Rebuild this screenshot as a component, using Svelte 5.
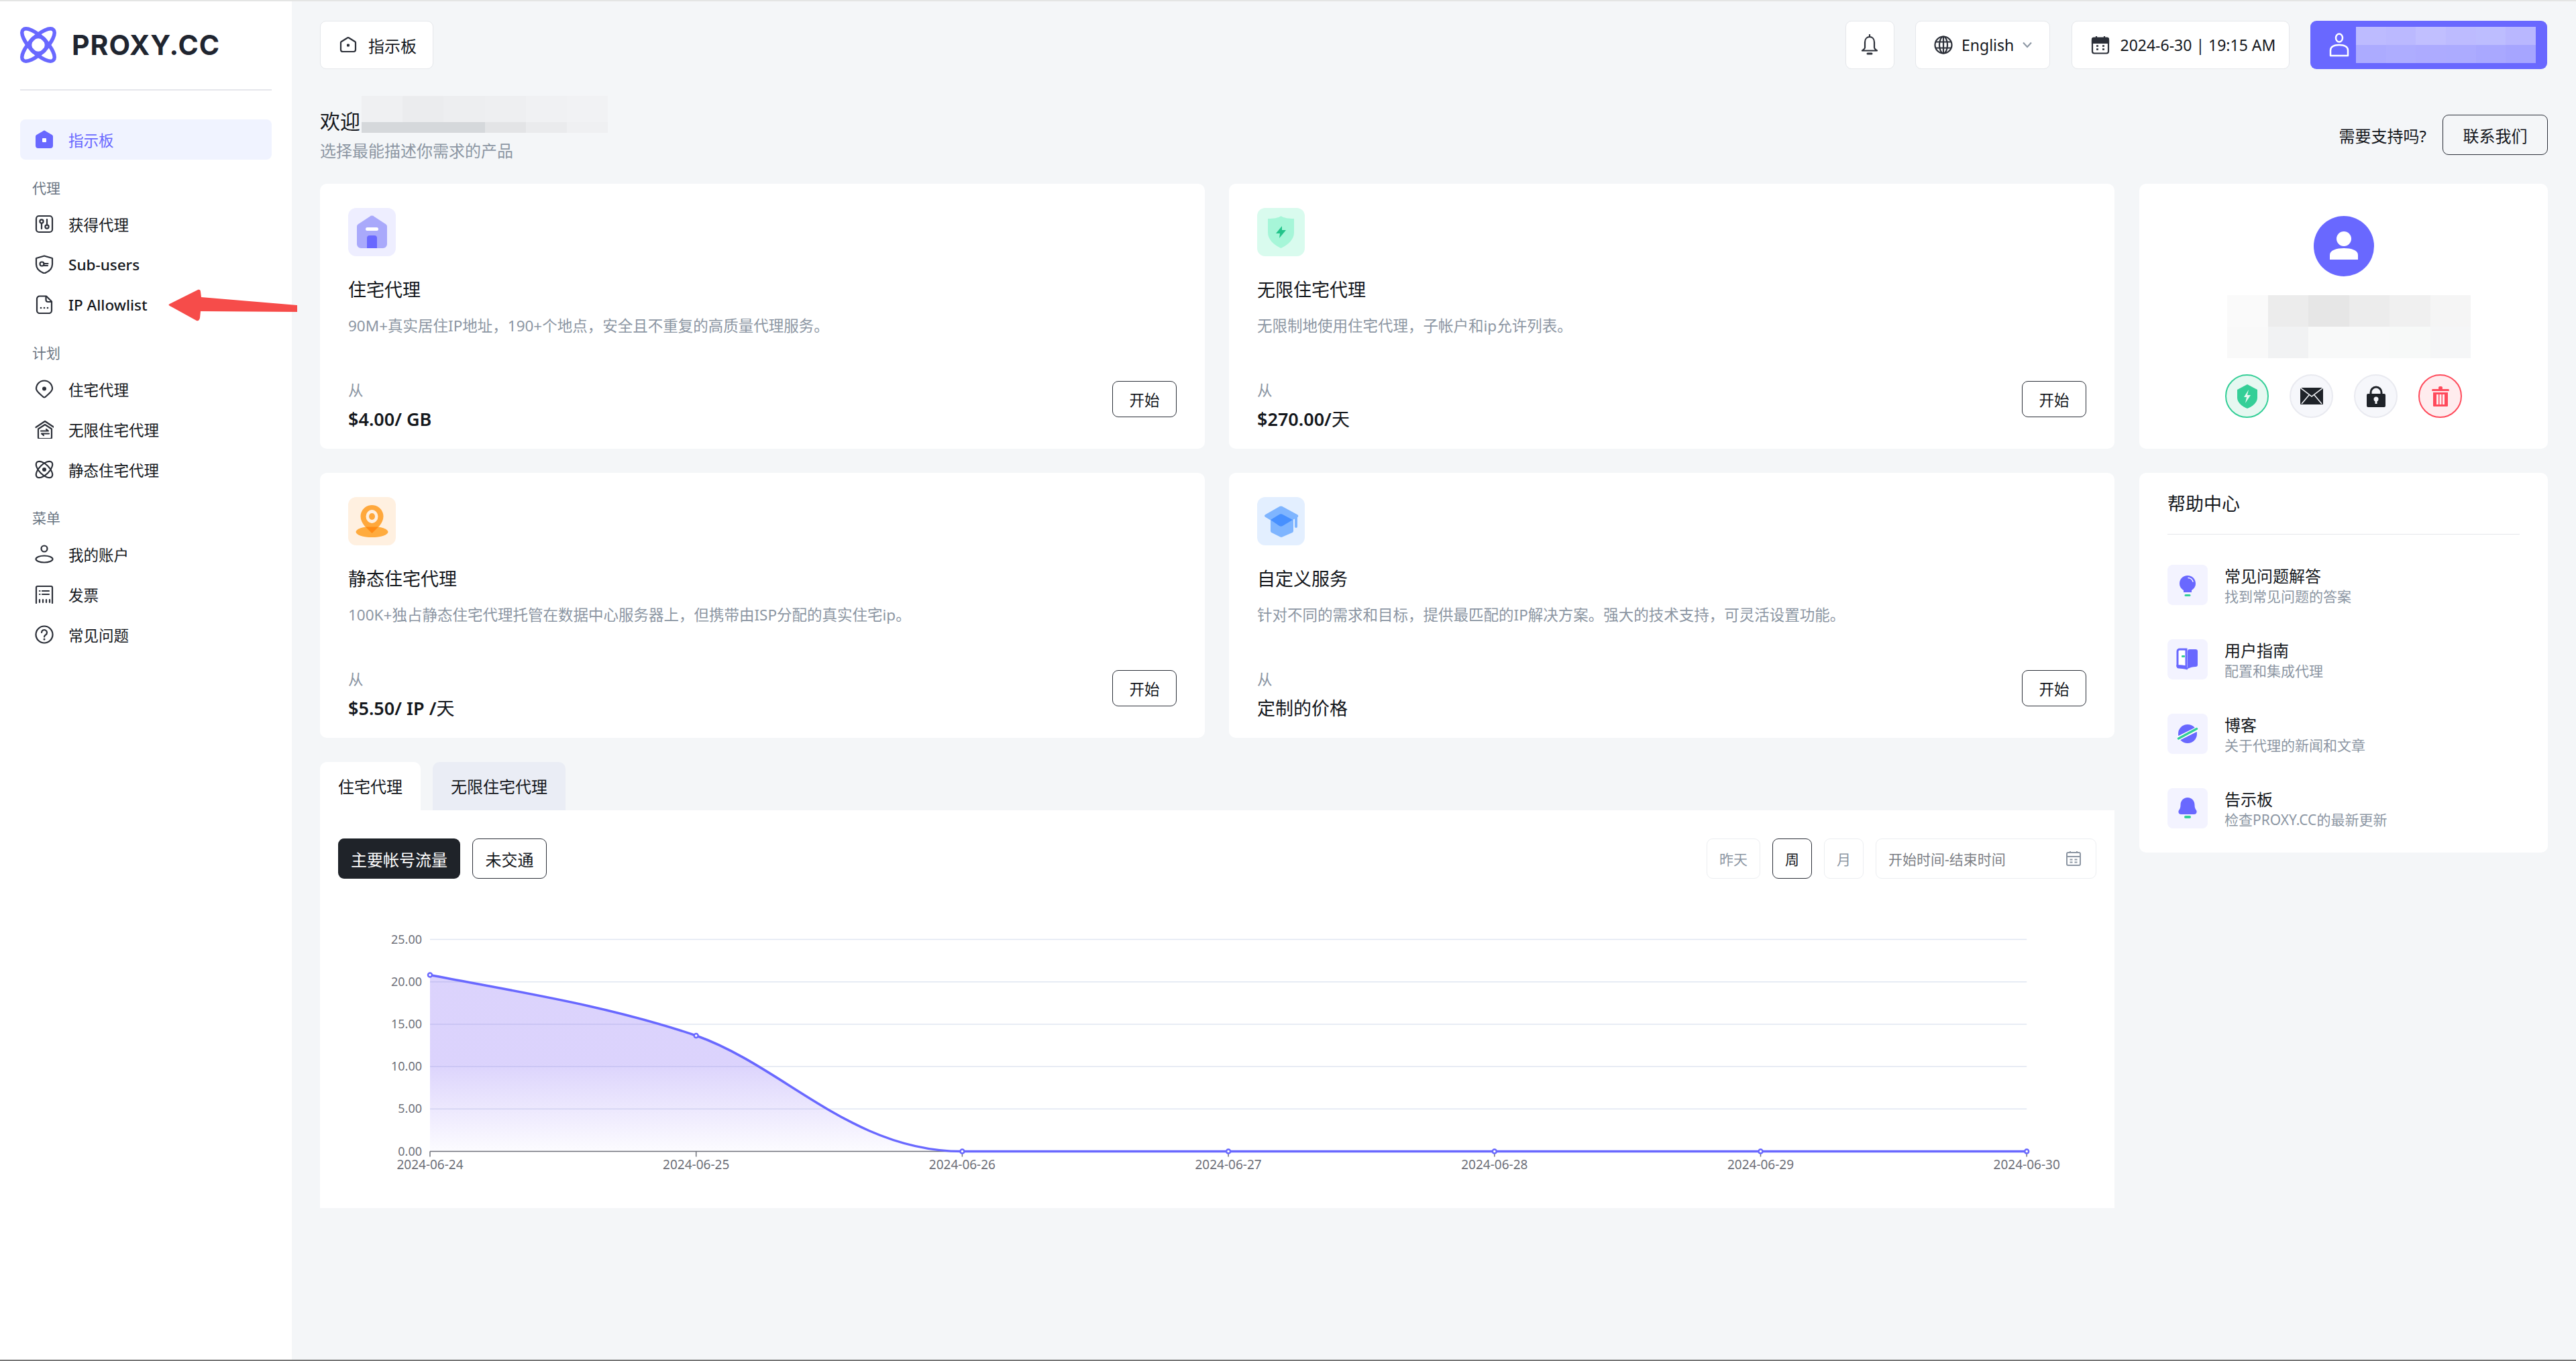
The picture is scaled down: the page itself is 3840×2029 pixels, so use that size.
<script>
    const ink = 'fill="none" stroke="#2b2f38" stroke-width="2.2" stroke-linecap="round" stroke-linejoin="round"';

    const icons = {
        sliders: `<g ${ink}><rect x="2" y="2" width="24" height="24" rx="4"/><circle cx="10" cy="10" r="2.6"/><path d="M10 13v8M18 7v7"/><circle cx="18" cy="18" r="2.6"/></g>`,
        shield: `<g ${ink}><path d="M14 1.5l12 3.5v9c0 7-5 11-12 13.5C7 25 2 21 2 14V5z"/><circle cx="10.5" cy="13.5" r="3"/><path d="M13.5 13h6M14 16h5"/></g>`,
        file: `<g ${ink}><path d="M7 1.5h10l8 8V23a4 4 0 0 1-4 4H7a4 4 0 0 1-4-4V5.500a4 4 0 0 1 4-4z"/><path d="M16.500 2v5a3 3 0 0 0 3 3H25"/></g><g fill="#2b2f38"><circle cx="9" cy="19" r="1.300"/><circle cx="14" cy="19" r="1.300"/><circle cx="19" cy="19" r="1.300"/></g>`,
        pin: `<g ${ink}><path d="M14 26.500c-1 0-2-1-3-2C6 20 2 17 2 13.500a12 12 0 0 1 24 0c0 3.500-4 6.500-9 11-1 1-2 2-3 2z"/></g><circle cx="14" cy="13.500" r="3" fill="#2b2f38"/>`,
        house: `<g ${ink}><path d="M1.500 11L15 2l13.500 9"/><path d="M5 13.500L15 7l10 6.500V26a2 2 0 0 1-2 2H7a2 2 0 0 1-2-2z"/><path d="M9 16.500h11l-3-2.500M21 20.500H10l3 2.500"/></g>`,
        atom: `<g ${ink}><ellipse cx="14" cy="14" rx="15.500" ry="7.500" transform="rotate(45 14 14)"/><ellipse cx="14" cy="14" rx="15.500" ry="7.500" transform="rotate(-45 14 14)"/></g><circle cx="14" cy="14" r="3" fill="#2b2f38"/>`,
        person: `<g ${ink}><circle cx="14" cy="6" r="4.500"/><ellipse cx="14" cy="21.500" rx="12.500" ry="5"/></g>`,
        receipt: `<g ${ink}><path d="M2 27V4a2 2 0 0 1 2-2h20a2 2 0 0 1 2 2v23"/><path d="M11 9h10M11 14h10M7 9h.5M7 14h.5M7 22v4M12 22v4M17 22v4M22 22v4"/></g>`,
        question: `<g ${ink}><circle cx="14" cy="14" r="12.500"/><path d="M10 11a4 4 0 1 1 6 3.500c-1.500.8-2 1.500-2 3"/></g><circle cx="14" cy="21" r="1.500" fill="#2b2f38"/>`
    };

    const sections = [
        { label: '代理', items: [
            { text: '获得代理', icon: 'sliders' },
            { text: 'Sub-users', icon: 'shield', latin: true },
            { text: 'IP Allowlist', icon: 'file', latin: true }
        ] },
        { label: '计划', items: [
            { text: '住宅代理', icon: 'pin' },
            { text: '无限住宅代理', icon: 'house' },
            { text: '静态住宅代理', icon: 'atom' }
        ] },
        { label: '菜单', items: [
            { text: '我的账户', icon: 'person' },
            { text: '发票', icon: 'receipt' },
            { text: '常见问题', icon: 'question' }
        ] }
    ];

    const cards = [
        {
            title: '住宅代理', tone: 'violet', price: '$4.00/ GB',
            desc: '90M+真实居住IP地址，190+个地点，安全且不重复的高质量代理服务。',
            art: `<path d="M13 28c0-1.500.5-2.500 1.500-3.500L32 13a5 5 0 0 1 7 0l17.500 11.500c1 1 1.500 2 1.500 3.500v26a6 6 0 0 1-6 6H19a6 6 0 0 1-6-6z" fill="#a9a9fb"/><rect x="26" y="29" width="19" height="5" rx="2.500" fill="#fff"/><path d="M28 45a4 4 0 0 1 4-4h7a4 4 0 0 1 4 4v15H28z" fill="#6968ff"/>`
        },
        {
            title: '无限住宅代理', tone: 'green', price: '$270.00/', unit: '天',
            desc: '无限制地使用住宅代理，子帐户和ip允许列表。',
            art: `<path d="M35.500 12c4 3 12 4 19.500 4v21c0 10-9 18-19.500 23C25 55 16 47 16 37V16c8 0 15.500-1 19.500-4z" fill="#a6f6d8"/><path d="M37 27L28 38h6l-1 7 10-12h-6z" fill="#22c48a"/>`
        },
        {
            title: '静态住宅代理', tone: 'orange', price: '$5.50/ IP /', unit: '天',
            desc: '100K+独占静态住宅代理托管在数据中心服务器上，但携带由ISP分配的真实住宅ip。',
            art: `<ellipse cx="35.500" cy="52" rx="24" ry="8" fill="#ffab3e"/><path d="M35.500 12c9.500 0 17 7.500 17 17 0 10-10 19-17 25-7-6-17-15-17-25 0-9.500 7.500-17 17-17z" fill="#ffa83c"/><path d="M26 44.500h19l-9.500 9.500z" fill="#ff8a14"/><ellipse cx="35.500" cy="29" rx="9" ry="10" fill="#fff0e0"/><ellipse cx="35.500" cy="29" rx="4.500" ry="5" fill="#ffa83c"/>`
        },
        {
            title: '自定义服务', tone: 'blue', unit: '定制的价格',
            desc: '针对不同的需求和目标，提供最匹配的IP解决方案。强大的技术支持，可灵活设置功能。',
            art: `<path d="M20 30h34v20.500a3 3 0 0 1-1.500 2.500l-15 6.500a3 3 0 0 1-3 0l-13-6.500a3 3 0 0 1-1.500-2.500z" fill="#7fb5ff"/><path d="M33.500 14a4 4 0 0 1 4 0l23 12.500c1 1 1 2.500 0 3.500l-23 12.500a4 4 0 0 1-4 0l-21-12.500c-2-1-2-3 0-4z" fill="#7fb5ff"/><path d="M33 26a5 5 0 0 1 5 0l15 8-15 9a5 5 0 0 1-5 0l-13-9z" fill="#4790ff"/><rect x="56" y="28" width="4" height="18" rx="2" fill="#7fb5ff"/>`
        }
    ];

    const helps = [
        { title: '常见问题解答', sub: '找到常见问题的答案',
          art: `<path d="M30 16c7 0 12 5 12 12 0 5-3 8-6 10v3H24v-3c-3-2-6-5-6-10 0-7 5-12 12-12z" fill="#6968ff"/><path d="M31 19.500c3 0 6 2.500 7 5.500" fill="none" stroke="#fff" stroke-width="1.500" stroke-linecap="round"/><rect x="25.500" y="44" width="9" height="3" rx="1.500" fill="#34cf97"/>` },
        { title: '用户指南', sub: '配置和集成代理',
          art: `<path d="M15 18a3 3 0 0 1 3-3h10v26c-4-1-8-1.500-13-1.500z" fill="#fff" stroke="#6968ff" stroke-width="3"/><path d="M30 44V18a3 3 0 0 1 3-3h9a3 3 0 0 1 3 3v20a3 3 0 0 1-3 3c-4 0-8 1-12 3z" fill="#6968ff"/><path d="M15 38v2a2 2 0 0 0 2 2c5 0 9 1 13 2" fill="none" stroke="#6968ff" stroke-width="3"/><rect x="21" y="24" width="5" height="3" rx="1" fill="#34cf97"/>` },
        { title: '博客', sub: '关于代理的新闻和文章',
          art: `<ellipse cx="30" cy="30" rx="14" ry="14" fill="#6968ff"/><path d="M16 37l28-14" stroke="#fff" stroke-width="6.500"/><path d="M16.500 37l27-14.500" stroke="#34cf97" stroke-width="3.500" stroke-linecap="round"/>` },
        { title: '告示板', sub: '检查PROXY.CC的最新更新',
          art: `<path d="M30 14c6.500 0 10.500 5 10.500 11 0 4 1 6 2.500 8 1.500 2.500 0 6-3 6H20c-3 0-4.500-3.500-3-6 1.500-2 2.500-4 2.500-8 0-6 4-11 10.500-11z" fill="#6968ff"/><rect x="25" y="41" width="10" height="4" rx="2" fill="#34cf97"/>` }
    ];

    // pixelated blocks that hide the account name
    const welcomeBlur = [
        ['#eff0f2', '#ebecee', '#edeef0', '#eeeff1', '#f0f1f3', '#f1f2f4'],
        ['#d5d8db', '#d5d8db', '#d5d8db', '#e3e4e6', '#eaebed', '#eff0f2']
    ];
    const profileBlur = [
        ['#fafafa', '#ececec', '#e6e6e6', '#ececec', '#f0f0f0', '#f5f5f5'],
        ['#f9f9f9', '#f1f2f3', '#f8f9f9', '#f8f9f9', '#f7f9f8', '#f5f6f7']
    ];
    const userBlur = [
        ['#bdbbff', '#bbb9ff', '#c1bfff', '#bdbbff', '#bdbdff', '#b9b7ff'],
        ['#acabff', '#aeadff', '#adabff', '#acabff', '#a9a8ff', '#a6a5ff']
    ];

    // chart, in page pixels through the svg viewBox
    const left = 641;
    const step = 396.7;
    const base = 1715.5;
    const unit = 63.2;
    const ticks = [0, 1, 2, 3, 4, 5];
    const dates = ['2024-06-24', '2024-06-25', '2024-06-26', '2024-06-27', '2024-06-28', '2024-06-29', '2024-06-30'];
    const points = [1452.5, 1543, base, base, base, base, base];
    const right = left + step * 6;
    const falling = 'M641 1452.500C773 1478 905 1498 1038 1543C1170 1590 1270 1715.500 1434.400 1715.500';
    const curve = `${falling}H${right}`;
    const area = `${falling}H641Z`;
</script>

<div class="page">
    <aside class="side">
        <div class="brand">
            <svg width="54" height="54" viewBox="0 0 54 54" fill="none" stroke="#6968ff" stroke-width="5.500">
                <ellipse cx="27" cy="27" rx="32" ry="12" transform="rotate(45 27 27)" />
                <ellipse cx="27" cy="27" rx="32" ry="12" transform="rotate(-45 27 27)" />
                <circle cx="27" cy="27" r="12.500" />
            </svg>
            <span>PROXY.CC</span>
        </div>

        <a class="nav active">
            <svg width="28" height="28" viewBox="0 0 28 28">
                <path d="M12 1.500a3 3 0 0 1 4 0l9.500 5.500a3 3 0 0 1 1.500 2.500V23a4 4 0 0 1-4 4H5a4 4 0 0 1-4-4V9.500A3 3 0 0 1 2.500 7z" fill="#6968ff" />
                <rect x="11" y="12" width="6" height="6" rx="1" fill="#fff" />
            </svg>
            指示板
        </a>

        {#each sections as section}
            <div class="group-label">{section.label}</div>
            {#each section.items as item}
                <a class="nav" class:latin={item.latin}>
                    <svg width="28" height="28" viewBox="0 0 28 28">{@html icons[item.icon]}</svg>
                    {item.text}
                </a>
            {/each}
        {/each}
    </aside>

    <main class="main">
        <header class="top">
            <div class="chip crumb">
                <svg width="26" height="26" viewBox="0 0 26 26" fill="none" stroke="#2b2f38" stroke-width="2.200" stroke-linejoin="round">
                    <path d="M11 3a3 3 0 0 1 4 0l8 5a2 2 0 0 1 1 2v10a3 3 0 0 1-3 3H5a3 3 0 0 1-3-3V10a2 2 0 0 1 1-2z" />
                    <rect x="11.500" y="12" width="3" height="3" fill="#2b2f38" stroke-width="1" />
                </svg>
                指示板
            </div>
            <div class="top-right">
                <div class="chip bell">
                    <svg width="26" height="32" viewBox="0 0 26 32" fill="none" stroke="#2b2f38" stroke-width="2.200" stroke-linecap="round" stroke-linejoin="round">
                        <path d="M13 1v3M13 4c-4 0-7 3-7 8v8c0 2-2 3-4 4.500h22c-2-1.500-4-2.500-4-4.500v-8c0-5-3-8-7-8z" />
                        <path d="M10 29h6" stroke-width="3" />
                    </svg>
                </div>
                <div class="chip lang">
                    <svg width="28" height="28" viewBox="0 0 28 28" fill="none" stroke="#2b2f38" stroke-width="2.200">
                        <circle cx="14" cy="14" r="12.500" />
                        <ellipse cx="14" cy="14" rx="6" ry="12.500" />
                        <path d="M3 9.500h22M3 18.500h22M14 1.500v25" />
                    </svg>
                    English
                    <svg width="14" height="10" viewBox="0 0 14 10" fill="none" stroke="#8c96a3" stroke-width="2"><path d="M1 1.500l6 6.500 6-6.500" /></svg>
                </div>
                <div class="chip date">
                    <svg width="28" height="28" viewBox="0 0 28 28" fill="none" stroke="#2b2f38" stroke-width="2.200">
                        <rect x="2" y="4" width="24" height="22.500" rx="3" />
                        <path d="M2 5.500a2 2 0 0 1 2-2h20a2 2 0 0 1 2 2V11H2z" fill="#2b2f38" />
                        <path d="M8 1v4M20 1v4" />
                        <path d="M8 15.500h3M17 15.500h3M8 20.500h3M17 20.500h3" stroke-width="2.500" />
                    </svg>
                    2024-6-30 | 19:15 AM
                </div>
                <div class="user-btn">
                    <svg width="30" height="40" viewBox="0 0 30 40" fill="none" stroke="#fff" stroke-width="2.500" stroke-linejoin="round">
                        <ellipse cx="15" cy="9.500" rx="5" ry="6" />
                        <path d="M2 36V28c0-5 5-8 13-8s13 3 13 8v8z" />
                    </svg>
                    <div class="blur user-blur">
                        {#each userBlur as row}
                            <div class="blur-row">
                                {#each row as shade}<i style:background={shade}></i>{/each}
                            </div>
                        {/each}
                    </div>
                </div>
            </div>
        </header>

        <section class="hello">
            <div>
                <div class="hello-line">
                    <span>欢迎</span>
                    <div class="blur hello-blur">
                        {#each welcomeBlur as row}
                            <div class="blur-row">
                                {#each row as shade}<i style:background={shade}></i>{/each}
                            </div>
                        {/each}
                    </div>
                </div>
                <p>选择最能描述你需求的产品</p>
            </div>
            <div class="support">
                需要支持吗?
                <button class="outline contact">联系我们</button>
            </div>
        </section>

        <div class="layout">
            <div class="col-left">
                <div class="cards">
                    {#each cards as card}
                        <article class="card">
                            <div class="art {card.tone}">
                                <svg width="71" height="72" viewBox="0 0 71 72">{@html card.art}</svg>
                            </div>
                            <h3>{card.title}</h3>
                            <p class="desc">{card.desc}</p>
                            <div class="foot">
                                <div>
                                    <div class="from">从</div>
                                    <div class="price">{card.price ?? ''}{#if card.unit}<span>{card.unit}</span>{/if}</div>
                                </div>
                                <button class="outline start">开始</button>
                            </div>
                        </article>
                    {/each}
                </div>

                <div class="tabs">
                    <div class="tab on">住宅代理</div>
                    <div class="tab">无限住宅代理</div>
                </div>
                <div class="panel">
                    <div class="tools">
                        <button class="dark">主要帐号流量</button>
                        <button class="outline unpaid">未交通</button>
                        <div class="range">
                            <span class="seg w80">昨天</span>
                            <span class="seg w60 sel">周</span>
                            <span class="seg w60">月</span>
                            <div class="picker">
                                开始时间-结束时间
                                <svg width="24" height="24" viewBox="0 0 24 24" fill="none" stroke="#8c96a3" stroke-width="2">
                                    <rect x="2" y="3" width="20" height="19" rx="2" />
                                    <path d="M2 9h20M7 1v3M17 1v3M6.500 13.500h4M13.500 13.500h4M6.500 17.500h4M13.500 17.500h4" />
                                </svg>
                            </div>
                        </div>
                    </div>
                    <svg class="chart" width="2675" height="440" viewBox="477 1360 2675 440">
                        <defs>
                            <linearGradient id="fade" x1="0" y1="0" x2="0" y2="1">
                                <stop offset="0" stop-color="#7b5cf5" stop-opacity="0.27" />
                                <stop offset="0.5" stop-color="#7b5cf5" stop-opacity="0.27" />
                                <stop offset="1" stop-color="#7b5cf5" stop-opacity="0.02" />
                            </linearGradient>
                        </defs>
                        {#each ticks as t}
                            {#if t > 0}
                                <line x1={left} x2={right} y1={base - t * unit} y2={base - t * unit} stroke="#e0e6f1" stroke-width="1.500" />
                            {/if}
                            <text class="y-label" x="629" y={base - t * unit + 6}>{(t * 5).toFixed(2)}</text>
                        {/each}
                        <path d={area} fill="url(#fade)" />
                        <line x1={left} x2={right} y1={base} y2={base} stroke="#6e7079" stroke-width="1.500" />
                        {#each dates as d, i}
                            <line x1={left + i * step} x2={left + i * step} y1={base} y2={base + 8} stroke="#6e7079" stroke-width="1.500" />
                            <text class="x-label" x={left + i * step} y={base + 26}>{d}</text>
                        {/each}
                        <path d={curve} fill="none" stroke="#6968ff" stroke-width="3.500" />
                        {#each points as y, i}
                            <circle cx={left + i * step} cy={y} r="3" fill="#fff" stroke="#6968ff" stroke-width="2.500" />
                        {/each}
                    </svg>
                </div>
            </div>

            <div class="col-right">
                <article class="profile">
                    <div class="avatar">
                        <svg width="48" height="48" viewBox="0 0 48 48" fill="#fff">
                            <ellipse cx="24" cy="13" rx="11" ry="11" />
                            <path d="M3 44v-7c0-7 10-10 21-10s21 3 21 10v7z" />
                        </svg>
                    </div>
                    <div class="blur profile-blur">
                        {#each profileBlur as row}
                            <div class="blur-row">
                                {#each row as shade}<i style:background={shade}></i>{/each}
                            </div>
                        {/each}
                    </div>
                    <div class="badges">
                        <span class="badge ok">
                            <svg width="32" height="36" viewBox="0 0 32 36">
                                <path d="M16 0l15 8v12c0 7-7 13-15 16C8 33 1 27 1 20V8z" fill="#34cf97" />
                                <path d="M18 8l-7 11h4l-2 9 8-12h-5z" fill="#e6f8f1" />
                            </svg>
                        </span>
                        <span class="badge">
                            <svg width="34" height="26" viewBox="0 0 34 26">
                                <rect width="34" height="25" rx="1" fill="#1f2329" />
                                <path d="M0 0l17 13L34 0M2 24l11-13M32 24L21 11" fill="none" stroke="#f6f7fb" stroke-width="1.500" />
                            </svg>
                        </span>
                        <span class="badge">
                            <svg width="28" height="32" viewBox="0 0 28 32">
                                <path d="M6 14V10a8 8 0 0 1 16 0v4" fill="none" stroke="#1f2329" stroke-width="3" />
                                <rect y="12" width="28" height="20" rx="2" fill="#1f2329" />
                                <circle cx="14" cy="20" r="3.500" fill="#f6f7fb" />
                                <rect x="12.500" y="20" width="3" height="7" fill="#f6f7fb" />
                            </svg>
                        </span>
                        <span class="badge bad">
                            <svg width="26" height="30" viewBox="0 0 26 30" fill="#ff4a5b">
                                <rect y="4" width="26" height="3" rx="1.500" />
                                <rect x="10" width="6" height="5" rx="2" />
                                <path d="M2 9h22v20a1 1 0 0 1-1 1H3a1 1 0 0 1-1-1zM7 12v15h3V12zM11.500 12v15h3V12zM16 12v15h3V12z" fill-rule="evenodd" />
                            </svg>
                        </span>
                    </div>
                </article>

                <article class="help">
                    <h3>帮助中心</h3>
                    <div class="help-list">
                        {#each helps as help}
                            <div class="help-row">
                                <div class="help-art">
                                    <svg width="60" height="60" viewBox="0 0 60 60">{@html help.art}</svg>
                                </div>
                                <div>
                                    <div class="help-title">{help.title}</div>
                                    <div class="help-sub">{help.sub}</div>
                                </div>
                            </div>
                        {/each}
                    </div>
                </article>
            </div>
        </div>
    </main>

    <svg class="arrow" width="200" height="60" viewBox="0 0 200 60">
        <path d="M3 23L45 2c2-1 4 0 4 3l1 8 143 12v10l-144-1-1 10c-1 4-3 5-5 4L3 26c-2-1-2-2 0-3z" fill="#f64c4a" />
    </svg>
</div>

<style>
    :global(body) {
        margin: 0;
        background: #f4f6f8;
        font-family: "Noto Sans", "Noto Sans CJK SC", sans-serif;
        color: #14171c;
    }

    .page {
        position: relative;
        display: flex;
        height: 2029px;
        box-sizing: border-box;
        border-top: 2px solid #e4e5e4;
        border-bottom: 2px solid #777;
        overflow: hidden;
    }

    .side {
        width: 435px;
        flex: none;
        box-sizing: border-box;
        padding: 38px 30px 0;
        background: #fff;
    }

    .brand {
        display: flex;
        align-items: center;
        gap: 23px;
        height: 54px;
        padding-bottom: 39px;
        border-bottom: 2px solid #e5e6eb;
        color: #1f2530;
        font-family: Inter, "Noto Sans", sans-serif;
        font-size: 41px;
        font-weight: 700;
        letter-spacing: 1px;
    }

    .nav {
        display: flex;
        align-items: center;
        gap: 22px;
        height: 60px;
        padding-left: 22px;
        font-size: 22.5px;
    }

    .nav.latin {
        font-weight: 500;
    }

    .active {
        margin-top: 43px;
        border-radius: 8px;
        background: #f0f3ff;
        color: #6968ff;
    }

    .group-label {
        padding: 26px 0 0 18px;
        height: 40px;
        line-height: 32px;
        font-size: 21px;
        color: #6b7683;
    }

    .main {
        flex: 1;
        box-sizing: border-box;
        padding: 29px 42px 0;
    }

    .top {
        display: flex;
        justify-content: space-between;
        height: 72px;
    }

    .top-right {
        display: flex;
        gap: 31.5px;
        padding-right: 1px;
    }

    .chip {
        display: flex;
        align-items: center;
        box-sizing: border-box;
        border: 1.5px solid #e5e7eb;
        border-radius: 9px;
        background: #fff;
        font-size: 23px;
    }

    .crumb {
        width: 169px;
        gap: 17px;
        padding-left: 28px;
        font-size: 24px;
    }

    .bell {
        width: 73px;
        justify-content: center;
    }

    .lang {
        width: 201px;
        padding-left: 27px;
        gap: 13px;
    }

    .date {
        width: 325px;
        padding-left: 28px;
        gap: 16px;
    }

    .user-btn {
        display: flex;
        align-items: center;
        width: 353px;
        box-sizing: border-box;
        padding-left: 28px;
        gap: 10px;
        border-radius: 9px;
        background: #6968ff;
    }

    .blur {
        display: flex;
        flex-direction: column;
        flex: none;
    }

    .blur-row {
        display: flex;
        flex: 1;
    }

    .blur-row i {
        flex: 1;
    }

    .user-blur {
        width: 268px;
        height: 54px;
    }

    .hello {
        display: flex;
        justify-content: space-between;
        height: 171px;
    }

    .hello-line {
        display: flex;
        align-items: flex-end;
        height: 55px;
        margin-top: 40px;
        font-size: 30px;
        line-height: 34px;
    }

    .hello-blur {
        width: 367px;
        height: 55px;
        margin-left: 2px;
    }

    .hello-blur .blur-row:first-child {
        flex: 39;
    }

    .hello-blur .blur-row:last-child {
        flex: 16;
    }

    .hello p {
        margin: 10px 0 0;
        font-size: 24px;
        line-height: 34px;
        color: #8c96a3;
    }

    .support {
        display: flex;
        align-items: center;
        gap: 24px;
        height: 60px;
        margin-top: 68px;
        font-size: 24px;
    }

    button {
        font: inherit;
        color: inherit;
        padding: 0;
    }

    .outline {
        box-sizing: border-box;
        border: 1.5px solid #2b2f38;
        border-radius: 9px;
        background: transparent;
    }

    .contact {
        width: 157px;
        height: 60px;
        font-size: 24px;
    }

    .layout {
        display: grid;
        grid-template-columns: 2675px 609px;
        gap: 37px;
    }

    .cards {
        display: grid;
        grid-template-columns: 1319px 1320px;
        grid-auto-rows: 395px;
        gap: 36px;
    }

    .card {
        display: flex;
        flex-direction: column;
        box-sizing: border-box;
        padding: 36px 42px 24px;
        border-radius: 10px;
        background: #fff;
    }

    .art {
        width: 71px;
        height: 72px;
        border-radius: 12px;
    }

    .art svg,
    .help-art svg {
        display: block;
    }

    .violet { background: #eeeeff; }
    .green { background: #d9fbee; }
    .orange { background: #fff0e0; }
    .blue { background: #e3efff; }

    h3 {
        margin: 0;
        font-size: 27px;
        font-weight: 400;
        line-height: 40px;
    }

    .card h3 {
        margin-top: 30px;
    }

    .desc {
        margin: 18px 0 0;
        font-size: 22.5px;
        line-height: 32px;
        color: #8c96a3;
    }

    .foot {
        display: flex;
        justify-content: space-between;
        align-items: flex-start;
        margin-top: auto;
    }

    .from {
        font-size: 22.5px;
        line-height: 32px;
        color: #8c96a3;
    }

    .price {
        margin-top: 7px;
        font-size: 27px;
        font-weight: 600;
        line-height: 40px;
    }

    .price span {
        font-weight: 400;
    }

    .start {
        width: 96px;
        height: 54px;
        margin-top: 2px;
        background: #fff;
        font-size: 22.5px;
    }

    .tabs {
        display: flex;
        gap: 18px;
        margin-top: 36px;
    }

    .tab {
        display: flex;
        align-items: center;
        justify-content: center;
        box-sizing: border-box;
        height: 72px;
        width: 198px;
        padding-bottom: 2px;
        border-radius: 10px 10px 0 0;
        background: #eaedf5;
        font-size: 24px;
    }

    .tab.on {
        width: 150px;
        background: #fff;
    }

    .panel {
        height: 593px;
        background: #fff;
    }

    .tools {
        display: flex;
        align-items: center;
        gap: 18px;
        padding: 42px 27px 0;
    }

    .dark {
        width: 182px;
        height: 60px;
        border: none;
        border-radius: 9px;
        background: #1f2329;
        color: #fff;
        font-size: 24px;
    }

    .unpaid {
        width: 111px;
        height: 60px;
        background: #fff;
        font-size: 24px;
    }

    .range {
        display: flex;
        gap: 18px;
        margin-left: auto;
        font-size: 21px;
        color: #8c96a3;
    }

    .seg {
        display: flex;
        align-items: center;
        justify-content: center;
        box-sizing: border-box;
        height: 60px;
        border: 1.5px solid #eceef1;
        border-radius: 9px;
    }

    .w80 { width: 80px; }
    .w60 { width: 59px; }

    .sel {
        border-color: #2b2f38;
        color: #14171c;
    }

    .picker {
        display: flex;
        align-items: center;
        justify-content: space-between;
        box-sizing: border-box;
        width: 329px;
        height: 60px;
        padding: 0 21px 0 18px;
        border: 1.5px solid #eceef1;
        border-radius: 9px;
        color: #7d7f86;
    }

    .chart {
        display: block;
        margin-top: 51px;
    }

    .y-label {
        font-size: 18px;
        fill: #6e7079;
        text-anchor: end;
    }

    .x-label {
        font-size: 19px;
        fill: #6e7079;
        text-anchor: middle;
    }

    .col-right {
        display: flex;
        flex-direction: column;
        gap: 36px;
    }

    .profile {
        display: flex;
        flex-direction: column;
        align-items: center;
        height: 395px;
        box-sizing: border-box;
        padding-top: 48px;
        border-radius: 10px;
        background: #fff;
    }

    .avatar {
        display: flex;
        align-items: center;
        justify-content: center;
        width: 90px;
        height: 90px;
        border-radius: 50%;
        background: #6968ff;
    }

    .profile-blur {
        width: 363px;
        height: 94px;
        margin: 28px 0 0 16px;
    }

    .badges {
        display: flex;
        gap: 31px;
        margin-top: 24px;
    }

    .badge {
        display: flex;
        align-items: center;
        justify-content: center;
        box-sizing: border-box;
        width: 65px;
        height: 65px;
        border: 2px solid #e9eaf0;
        border-radius: 50%;
        background: #f6f7fb;
    }

    .badge.ok {
        border-color: #34cf97;
        background: #e6f8f1;
    }

    .badge.bad {
        border-color: #ff4a5b;
        background: #ffecee;
    }

    .help {
        height: 566px;
        box-sizing: border-box;
        padding: 26px 42px 0;
        border-radius: 10px;
        background: #fff;
    }

    .help h3 {
        padding-bottom: 25px;
        border-bottom: 1px solid #e5e7eb;
    }

    .help-list {
        display: flex;
        flex-direction: column;
        gap: 51px;
        margin-top: 45px;
    }

    .help-row {
        display: flex;
        align-items: center;
        gap: 25px;
    }

    .help-art {
        width: 60px;
        height: 60px;
        border-radius: 8px;
        background: #f3f3ff;
    }

    .help-title {
        font-size: 24px;
        line-height: 34px;
    }

    .help-sub {
        font-size: 21px;
        line-height: 26px;
        color: #8c96a3;
    }

    .arrow {
        position: absolute;
        left: 250px;
        top: 428px;
    }
</style>
